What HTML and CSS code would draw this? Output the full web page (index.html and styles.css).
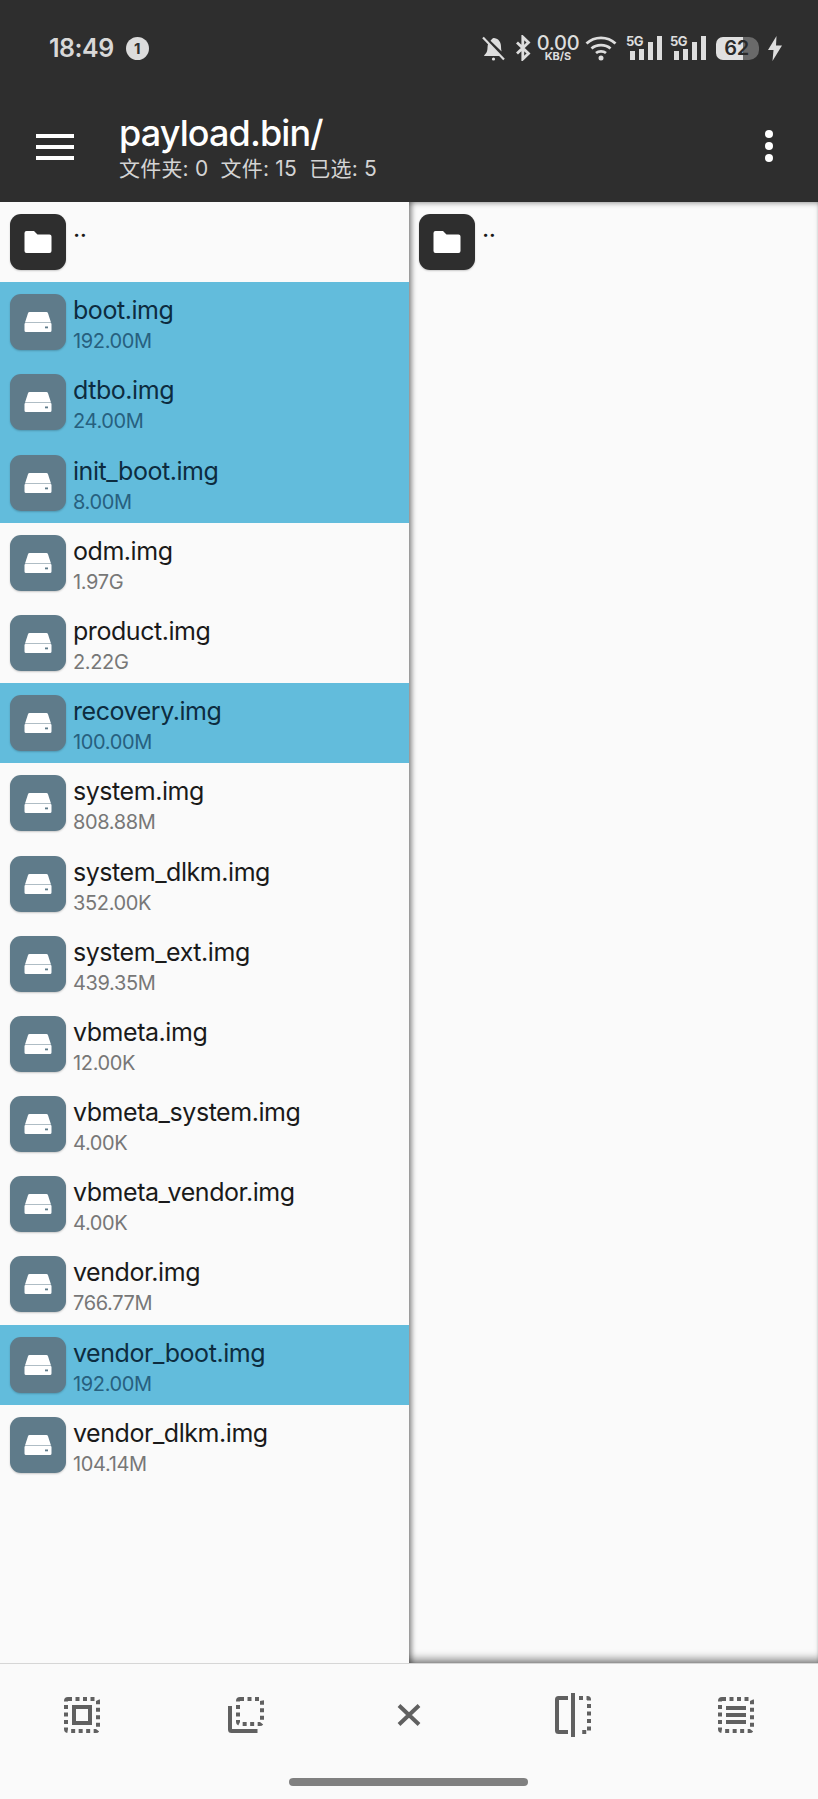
FILE: index.html
```html
<!DOCTYPE html>
<html lang="en">
<head>
    <meta charset="UTF-8">
    <meta name="viewport" content="width=device-width, initial-scale=1.0">
    <title>payload.bin</title>
    <link rel="stylesheet" href="styles.css">
</head>
<body>
    <svg class="sprites" xmlns="http://www.w3.org/2000/svg">
        <symbol id="folder" viewBox="0 0 28 24">
            <path d="M2.500 1h7.500l3.500 3.500h12a2 2 0 0 1 2 2V21a2 2 0 0 1-2 2h-23a2 2 0 0 1-2-2V3a2 2 0 0 1 2-2z" fill="#fff"/>
        </symbol>
        <symbol id="drive" viewBox="0 0 28 22">
            <path d="M5.500 1h17a1.500 1.500 0 0 1 1.400 1L27 11.500H1L4.100 2a1.500 1.500 0 0 1 1.400-1z" fill="#fff"/>
            <path d="M1.500 12h25a1 1 0 0 1 1 1v6.500a1.500 1.500 0 0 1-1.500 1.500H2a1.500 1.500 0 0 1-1.500-1.500V13a1 1 0 0 1 1-1z" fill="#fff"/>
            <rect x="21" y="15.500" width="3" height="1.800" fill="#5f7b8a"/>
        </symbol>
    </svg>

    <div class="app">
        <header class="topbar">
            <div class="statusbar">
                <div class="status-left">
                    <span class="clock">18:49</span>
                    <span class="notify-badge">1</span>
                </div>
                <div class="status-right">
                    <svg class="ic-bell" viewBox="0 0 24 26">
                        <path d="M3 20.500c2-2 3.500-3.500 3.500-8 0-1.500.3-3 1-4.200L20 21H3.500zM9.500 5.800C10.500 4.700 11 3.500 12.500 3c1-.3 1.500.2 2.500.5 3 1 5 4 5 8 0 2 .2 3.500.6 5z" fill="#ddd"/>
                        <path d="M2 2.500l21 22" stroke="#ddd" stroke-width="2.200" fill="none"/>
                        <circle cx="12.500" cy="24" r="1.600" fill="#ddd"/>
                    </svg>
                    <svg class="ic-bt" viewBox="0 0 16 26">
                        <path d="M2 7.500l11.500 11L7.800 24V2l5.700 5.500L2 18.500" stroke="#ddd" stroke-width="2.800" fill="none"/>
                    </svg>
                    <div class="netspeed"><span class="speed-num">0.00</span><span class="speed-unit">KB/S</span></div>
                    <svg class="ic-wifi" viewBox="0 0 32 26">
                        <path d="M1.500 8.500c8-7.500 21-7.500 29 0M6.500 13.500c5-4.500 14-4.500 19 0M11 18c2.800-2.300 7.200-2.300 10 0" stroke="#ddd" stroke-width="2.800" fill="none"/>
                        <circle cx="16" cy="23" r="2.500" fill="#ddd"/>
                    </svg>
                    <div class="signal"><span class="signal-tag">5G</span><i class="b1"></i><i class="b2"></i><i class="b3"></i><i class="b4"></i></div>
                    <div class="signal"><span class="signal-tag">5G</span><i class="b1"></i><i class="b2"></i><i class="b3"></i><i class="b4"></i></div>
                    <div class="battery"><span class="battery-num">62</span></div>
                    <svg class="ic-bolt" viewBox="0 0 14 25">
                        <path d="M8.500 0L0 14h5.500L4.500 25 14 9.500H8z" fill="#ddd"/>
                    </svg>
                </div>
            </div>
            <div class="titlebar">
                <div class="menu-btn"><span></span><span></span><span></span></div>
                <div class="title-wrap">
                    <div class="title">payload.bin/</div>
                    <div class="subtitle">文件夹: 0&nbsp; 文件: 15&nbsp; 已选: 5</div>
                </div>
                <div class="more-btn"><span></span><span></span><span></span></div>
            </div>
        </header>

        <main class="panels">
            <section class="panel panel-left">
                <div class="row">
                    <div class="file-icon folder-icon"><svg><use href="#folder"/></svg></div>
                    <div class="file-info"><div class="file-name parent">..</div></div>
                </div>
                <div class="row selected">
                    <div class="file-icon"><svg><use href="#drive"/></svg></div>
                    <div class="file-info"><div class="file-name">boot.img</div><div class="file-size">192.00M</div></div>
                </div>
                <div class="row selected">
                    <div class="file-icon"><svg><use href="#drive"/></svg></div>
                    <div class="file-info"><div class="file-name">dtbo.img</div><div class="file-size">24.00M</div></div>
                </div>
                <div class="row selected">
                    <div class="file-icon"><svg><use href="#drive"/></svg></div>
                    <div class="file-info"><div class="file-name">init_boot.img</div><div class="file-size">8.00M</div></div>
                </div>
                <div class="row">
                    <div class="file-icon"><svg><use href="#drive"/></svg></div>
                    <div class="file-info"><div class="file-name">odm.img</div><div class="file-size">1.97G</div></div>
                </div>
                <div class="row">
                    <div class="file-icon"><svg><use href="#drive"/></svg></div>
                    <div class="file-info"><div class="file-name">product.img</div><div class="file-size">2.22G</div></div>
                </div>
                <div class="row selected">
                    <div class="file-icon"><svg><use href="#drive"/></svg></div>
                    <div class="file-info"><div class="file-name">recovery.img</div><div class="file-size">100.00M</div></div>
                </div>
                <div class="row">
                    <div class="file-icon"><svg><use href="#drive"/></svg></div>
                    <div class="file-info"><div class="file-name">system.img</div><div class="file-size">808.88M</div></div>
                </div>
                <div class="row">
                    <div class="file-icon"><svg><use href="#drive"/></svg></div>
                    <div class="file-info"><div class="file-name">system_dlkm.img</div><div class="file-size">352.00K</div></div>
                </div>
                <div class="row">
                    <div class="file-icon"><svg><use href="#drive"/></svg></div>
                    <div class="file-info"><div class="file-name">system_ext.img</div><div class="file-size">439.35M</div></div>
                </div>
                <div class="row">
                    <div class="file-icon"><svg><use href="#drive"/></svg></div>
                    <div class="file-info"><div class="file-name">vbmeta.img</div><div class="file-size">12.00K</div></div>
                </div>
                <div class="row">
                    <div class="file-icon"><svg><use href="#drive"/></svg></div>
                    <div class="file-info"><div class="file-name">vbmeta_system.img</div><div class="file-size">4.00K</div></div>
                </div>
                <div class="row">
                    <div class="file-icon"><svg><use href="#drive"/></svg></div>
                    <div class="file-info"><div class="file-name">vbmeta_vendor.img</div><div class="file-size">4.00K</div></div>
                </div>
                <div class="row">
                    <div class="file-icon"><svg><use href="#drive"/></svg></div>
                    <div class="file-info"><div class="file-name">vendor.img</div><div class="file-size">766.77M</div></div>
                </div>
                <div class="row selected">
                    <div class="file-icon"><svg><use href="#drive"/></svg></div>
                    <div class="file-info"><div class="file-name">vendor_boot.img</div><div class="file-size">192.00M</div></div>
                </div>
                <div class="row">
                    <div class="file-icon"><svg><use href="#drive"/></svg></div>
                    <div class="file-info"><div class="file-name">vendor_dlkm.img</div><div class="file-size">104.14M</div></div>
                </div>
            </section>
            <section class="panel panel-right">
                <div class="row">
                    <div class="file-icon folder-icon"><svg><use href="#folder"/></svg></div>
                    <div class="file-info"><div class="file-name parent">..</div></div>
                </div>
            </section>
        </main>

        <footer class="toolbar">
            <svg class="tool" viewBox="0 0 36 36">
                <rect x="2" y="2" width="32" height="32" rx="2" class="dots"/>
                <rect x="10" y="10" width="16" height="16" class="solid"/>
            </svg>
            <svg class="tool" viewBox="0 0 36 36">
                <rect x="10" y="2" width="24" height="25" rx="2" class="dots"/>
                <path d="M2 9v23.500a1.500 1.500 0 0 0 1.500 1.500h26" class="solid"/>
            </svg>
            <svg class="tool" viewBox="0 0 36 36">
                <path d="M8 8.500l20 19M28 8.500l-20 19" class="solid"/>
            </svg>
            <svg class="tool tool-tall" viewBox="0 0 36 44">
                <path d="M13 5H3.500A1.500 1.500 0 0 0 2 6.500v31A1.500 1.500 0 0 0 3.500 39H13" class="solid"/>
                <path d="M18 0v44" class="solid"/>
                <path d="M24 5h8.500A1.500 1.500 0 0 1 34 6.500v31a1.500 1.500 0 0 1-1.500 1.500H24" class="dots"/>
            </svg>
            <svg class="tool" viewBox="0 0 36 36">
                <rect x="2" y="2" width="32" height="32" rx="2" class="dots"/>
                <path d="M8 11h20M8 18h20M8 25h20" class="solid"/>
            </svg>
        </footer>
        <div class="home-bar"></div>
    </div>
</body>
</html>
```

FILE: styles.css
```css
* {
    margin: 0;
    padding: 0;
    box-sizing: border-box;
    font-family: Inter, "Noto Sans CJK SC", sans-serif;
}

body {
    background-color: #fafafa;
}

.sprites {
    display: none;
}

.app {
    width: 818px;
    height: 1799px;
    overflow: hidden;
    display: flex;
    flex-direction: column;
    position: relative;
}

/* header */
.topbar {
    height: 202px;
    background: #2e2e2e;
    flex-shrink: 0;
}

.statusbar {
    height: 96px;
    display: flex;
    justify-content: space-between;
    align-items: center;
    padding: 0 36px 0 49px;
}

.status-left {
    display: flex;
    align-items: center;
    gap: 12px;
}

.clock {
    color: #d8d8d8;
    font-size: 25px;
    font-weight: 600;
    letter-spacing: -0.5px;
}

.notify-badge {
    width: 23px;
    height: 23px;
    border-radius: 50%;
    background: #dcdcdc;
    color: #2e2e2e;
    font-size: 15px;
    font-weight: 700;
    display: flex;
    align-items: center;
    justify-content: center;
}

.status-right {
    display: flex;
    align-items: center;
}

.ic-bell {
    width: 24px;
    height: 26px;
    margin-right: 10px;
}

.ic-bt {
    width: 16px;
    height: 26px;
    margin-right: 7px;
}

.netspeed {
    width: 40px;
    display: flex;
    flex-direction: column;
    align-items: center;
    color: #ddd;
    margin-right: 7px;
}

.speed-num {
    font-size: 20px;
    line-height: 16px;
    font-weight: 500;
    letter-spacing: -0.3px;
}

.speed-unit {
    font-size: 11px;
    line-height: 10px;
    font-weight: 700;
}

.ic-wifi {
    width: 32px;
    height: 26px;
    margin-right: 9px;
}

.signal {
    width: 36px;
    height: 26px;
    position: relative;
    margin-right: 8px;
}

.signal-tag {
    position: absolute;
    left: 0;
    top: -2px;
    color: #ddd;
    font-size: 13px;
    font-weight: 700;
    letter-spacing: -0.6px;
}

.signal i {
    position: absolute;
    bottom: 1px;
    width: 5px;
    background: #ddd;
}

.signal .b1 { left: 4px; height: 9px; }
.signal .b2 { left: 13px; height: 11px; }
.signal .b3 { left: 22px; height: 18px; }
.signal .b4 { left: 31px; height: 24px; }

.battery {
    width: 43px;
    height: 23px;
    margin: 0 9px 0 2px;
    border-radius: 7px 10px 10px 7px;
    background: linear-gradient(90deg, #e0e0e0 0, #e0e0e0 63%, #6a6a6a 63%, #6a6a6a 100%);
    color: #2a2a2a;
    display: flex;
    align-items: center;
    justify-content: center;
}

.battery-num {
    font-size: 20px;
    font-weight: 600;
    letter-spacing: -0.5px;
    margin-right: 2px;
}

.ic-bolt {
    width: 14px;
    height: 25px;
}

.titlebar {
    height: 106px;
    display: flex;
    align-items: center;
    padding: 0 0 10px 36px;
}

.menu-btn {
    width: 38px;
    display: flex;
    flex-direction: column;
    gap: 7px;
    margin-top: 6px;
}

.menu-btn span {
    height: 4px;
    background: #fff;
}

.title-wrap {
    margin-left: 45px;
    flex: 1;
    padding-top: 8px;
}

.title {
    color: #fff;
    font-size: 36px;
    line-height: 40px;
    font-weight: 500;
    letter-spacing: -0.9px;
}

.subtitle {
    color: #d4d4d4;
    font-size: 21px;
    line-height: 28px;
    margin-top: 2px;
    letter-spacing: 0.2px;
}

.more-btn {
    width: 8px;
    margin-right: 45px;
    margin-top: 4px;
    display: flex;
    flex-direction: column;
    gap: 4px;
}

.more-btn span {
    height: 8px;
    border-radius: 50%;
    background: #fff;
}

/* two file panels */
.panels {
    flex: 1;
    display: flex;
    min-height: 0;
}

.panel {
    background: #fafafa;
}

.panel-left {
    width: 409px;
    flex-shrink: 0;
}

.panel-right {
    flex: 1;
    box-shadow: inset 5px 0 5px -2px rgba(0, 0, 0, 0.4), inset 0 5px 5px -3px rgba(0, 0, 0, 0.25), inset 0 -9px 8px -5px rgba(0, 0, 0, 0.45), inset -1px 0 2px -1px rgba(0, 0, 0, 0.15);
}

.row {
    height: 80.2px;
    display: flex;
    padding: 12px 0 0 10px;
}

.row.selected {
    background: #62bcdc;
}

.file-icon {
    width: 56px;
    height: 56px;
    border-radius: 11px;
    background: #5f7b8a;
    display: flex;
    align-items: center;
    justify-content: center;
    box-shadow: 0 1px 2px rgba(0, 0, 0, 0.2);
    flex-shrink: 0;
}

.file-icon svg {
    width: 28px;
    height: 24px;
}

.folder-icon {
    background: #2e2e2e;
}

.file-info {
    margin-left: 7px;
    margin-top: 1px;
}

.file-name {
    font-size: 25px;
    line-height: 30px;
    color: #1a1a1a;
    letter-spacing: -0.45px;
}

.file-name.parent {
    line-height: 26px;
}

.file-size {
    font-size: 20px;
    line-height: 30px;
    margin-top: 1px;
    color: #777;
    letter-spacing: -0.35px;
}

.selected .file-name {
    color: #0d2c40;
}

.selected .file-size {
    color: #27607f;
}

/* bottom actions */
.toolbar {
    height: 136px;
    flex-shrink: 0;
    background: #fafafa;
    border-top: 1px solid #d6d6d6;
    display: flex;
    justify-content: space-between;
    align-items: flex-start;
    padding: 33px 64px 0 64px;
}

.tool {
    width: 36px;
    height: 36px;
    fill: none;
}

.tool-tall {
    height: 44px;
    margin-top: -4px;
}

.solid {
    fill: none;
    stroke: #606060;
    stroke-width: 4px;
}

.dots {
    fill: none;
    stroke: #606060;
    stroke-width: 4px;
    stroke-dasharray: 4 3.500;
}

.home-bar {
    position: absolute;
    left: 289px;
    bottom: 13px;
    width: 239px;
    height: 8px;
    border-radius: 4px;
    background: #808080;
}
```
